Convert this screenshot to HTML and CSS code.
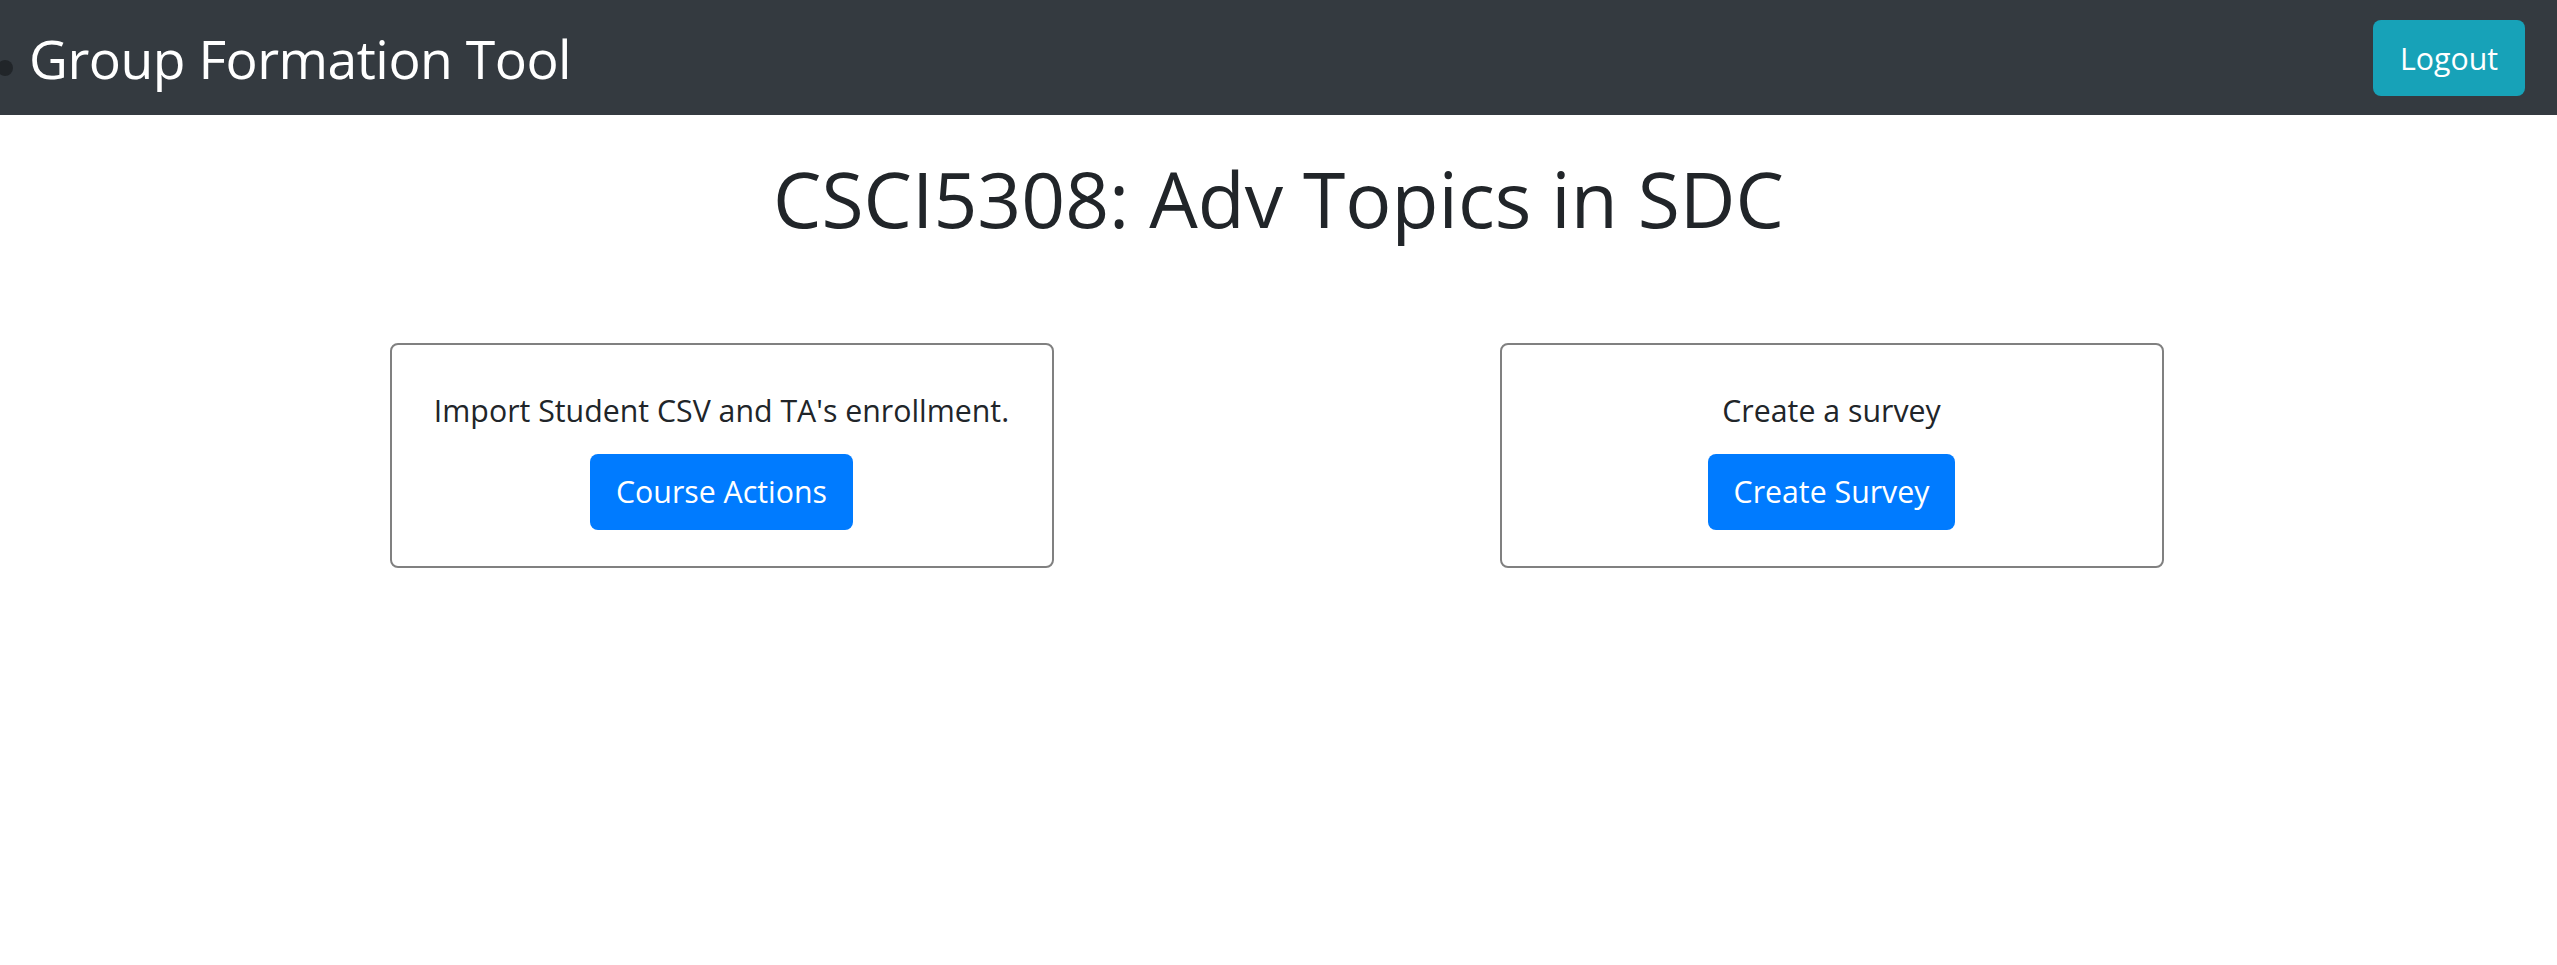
FILE: index.html
```html
<!DOCTYPE html>
<html lang="en">
<head>
<meta charset="utf-8">
<title>Group Formation Tool</title>
<link rel="stylesheet" href="styles.css">
</head>
<body>
<nav class="navbar">
  <div class="brand">
    <span class="bullet"></span>
    <span class="brand-text">Group Formation Tool</span>
  </div>
  <a class="btn btn-info" href="#">Logout</a>
</nav>
<main class="content">
  <h1 class="title">CSCI5308: Adv Topics in SDC</h1>
  <div class="row">
    <div class="col">
      <div class="card">
        <p class="card-text">Import Student CSV and TA's enrollment.</p>
        <a class="btn btn-primary" href="#">Course Actions</a>
      </div>
    </div>
    <div class="col">
      <div class="card">
        <p class="card-text">Create a survey</p>
        <a class="btn btn-primary" href="#">Create Survey</a>
      </div>
    </div>
  </div>
</main>
</body>
</html>
```
FILE: styles.css
```css
* { box-sizing: border-box; }
html, body { margin: 0; padding: 0; background: #fff; }
body {
  font-family: "Open Sans", "Noto Sans", sans-serif;
  color: #212529;
}
.navbar {
  height: 115px;
  background: #343a40;
  display: flex;
  align-items: center;
  justify-content: space-between;
  padding: 0 32px 0 0;
}
.brand {
  display: flex;
  align-items: center;
  padding-top: 3px;
}
.bullet {
  width: 16px;
  height: 16px;
  border-radius: 50%;
  background: #212529;
  margin-left: -3px;
  margin-top: 18px;
}
.brand-text {
  color: #fff;
  font-size: 53.5px;
  line-height: 1.2;
  margin-left: 16px;
  letter-spacing: -0.5px;
}
.btn {
  display: inline-flex;
  align-items: center;
  justify-content: center;
  height: 76px;
  border-radius: 8px;
  color: #fff;
  text-decoration: none;
  font-size: 30.3px;
  line-height: 1;
}
.btn-info {
  background: #17a2b8;
  width: 152px;
  padding-top: 3px;
}
.btn-primary {
  background: #007bff;
  padding: 2px 26px 0;
}
.content {
  text-align: center;
}
.title {
  margin: 38px 0 0;
  font-size: 76.8px;
  font-weight: 400;
  line-height: 1.2;
}
.row {
  display: grid;
  grid-template-columns: 1110px 1110px;
  justify-content: center;
  padding-right: 4px;
  margin-top: 98px;
}
.col {
  display: flex;
  justify-content: center;
}
.card {
  width: 664px;
  height: 225px;
  border: 2px solid #808080;
  border-radius: 8px;
  padding: 43px 20px 0;
  display: flex;
  flex-direction: column;
  align-items: center;
}
.card-text {
  margin: 0 0 20px;
  font-size: 30.3px;
  line-height: 1.5;
}
```
